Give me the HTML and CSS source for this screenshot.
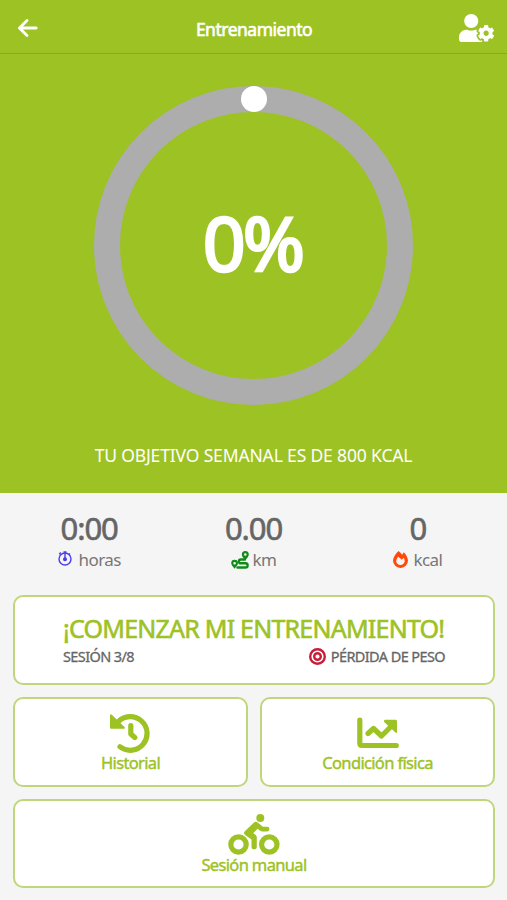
FILE: index.html
```
<!DOCTYPE html>
<html lang="es">
<head>
    <meta charset="UTF-8">
    <meta name="viewport" content="width=device-width, initial-scale=1.0">
    <title>Entrenamiento</title>
    <link rel="stylesheet" href="styles.css">
</head>
<body>

    <header class="topbar">
        <svg class="icon-back" viewBox="0 0 20 18"><path d="M18.200 9H2M9 1.500L1.500 9l7.500 7.500"/></svg>
        <h1 class="title">Entrenamiento</h1>
        <svg class="icon-user" viewBox="0 0 640 512"><path d="M610.500 373.300c2.600-14.100 2.600-28.500 0-42.600l25.800-14.900c3-1.700 4.300-5.200 3.300-8.500-6.700-21.600-18.200-41.200-33.200-57.400-2.300-2.500-6-3.100-9-1.400l-25.800 14.900c-10.900-9.300-23.400-16.500-36.900-21.300v-29.800c0-3.400-2.400-6.400-5.700-7.100-22.300-5-45-4.800-66.200 0-3.300.7-5.700 3.700-5.700 7.100v29.800c-13.500 4.800-26 12-36.900 21.300l-25.800-14.900c-2.900-1.700-6.700-1.100-9 1.400-15 16.200-26.500 35.800-33.200 57.400-1 3.300.4 6.800 3.300 8.500l25.800 14.900c-2.600 14.100-2.600 28.500 0 42.600l-25.800 14.900c-3 1.700-4.300 5.200-3.300 8.500 6.700 21.600 18.200 41.100 33.200 57.400 2.300 2.500 6 3.100 9 1.400l25.800-14.900c10.900 9.300 23.400 16.500 36.900 21.300v29.800c0 3.400 2.400 6.400 5.700 7.100 22.300 5 45 4.800 66.200 0 3.300-.7 5.700-3.700 5.700-7.100v-29.800c13.500-4.800 26-12 36.900-21.300l25.800 14.900c2.900 1.700 6.700 1.100 9-1.400 15-16.200 26.500-35.800 33.200-57.400 1-3.300-.4-6.800-3.300-8.500l-25.800-14.900zM496 400.500c-26.800 0-48.500-21.800-48.500-48.500s21.800-48.500 48.500-48.500 48.500 21.800 48.500 48.500-21.700 48.500-48.500 48.500zM224 256c70.700 0 128-57.300 128-128S294.700 0 224 0 96 57.300 96 128s57.300 128 128 128zm201.200 226.500c-2.300-1.200-4.600-2.600-6.800-3.900l-7.900 4.600c-6 3.400-12.800 5.300-19.600 5.300-10.900 0-21.400-4.600-28.900-12.600-18.300-19.800-32.300-43.900-40.200-69.600-5.500-17.700 1.900-36.400 17.900-45.700l7.900-4.600c-.1-2.600-.1-5.200 0-7.800l-7.900-4.600c-16-9.200-23.400-28-17.900-45.700.9-2.900 2.200-5.800 3.200-8.700-3.800-.3-7.500-1.200-11.400-1.200h-16.700c-22.200 10.200-46.900 16-72.900 16s-50.600-5.800-72.900-16h-16.700C60.200 288 0 348.200 0 422.400V464c0 26.500 21.500 48 48 48h352c10.100 0 19.500-3.200 27.200-8.500-1.200-3.800-2-7.700-2-11.800v-9.200z"/></svg>
    </header>

    <section class="goal">
        <div class="ring">
            <span class="ring-dot"></span>
            <span class="percent">0%</span>
        </div>
        <p class="goal-text">TU OBJETIVO SEMANAL ES DE 800 KCAL</p>
    </section>

    <section class="stats">
        <div class="stat">
            <span class="value">0:00</span>
            <div class="unit unit-hours">
                <svg class="icon-clock" viewBox="0 0 14 15"><circle cx="7" cy="8" r="6"/><path d="M7 .5V8M1.200 3.200L2.800 1.600M11 2.500l1 1M5.500 1h3"/><circle class="hub" cx="7" cy="8.200" r="1.300"/></svg>
                <span>horas</span>
            </div>
        </div>
        <div class="stat">
            <span class="value">0.00</span>
            <div class="unit unit-km">
                <svg class="icon-route" viewBox="0 0 18 18"><path d="M14 8.500H9.800a1.900 1.900 0 0 0 0 3.800h4.700a2.100 2.100 0 0 1 0 4.200H6.500"/><path class="pin" fill-rule="evenodd" d="M14.300 0a3.500 3.500 0 0 1 3.500 3.500c0 1.900-2 4-3.500 5.600-1.500-1.600-3.500-3.700-3.500-5.600A3.500 3.500 0 0 1 14.300 0zm0 2.200a1.300 1.300 0 1 0 0 2.600 1.300 1.300 0 0 0 0-2.600zM3.600 8.700a3.400 3.400 0 0 1 3.400 3.400c0 1.900-2 4-3.400 5.600C2.200 16.100.2 14 .2 12.100a3.400 3.400 0 0 1 3.400-3.400zm0 2.200a1.300 1.300 0 1 0 0 2.600 1.300 1.300 0 0 0 0-2.600z"/></svg>
                <span>km</span>
            </div>
        </div>
        <div class="stat">
            <span class="value">0</span>
            <div class="unit unit-kcal">
                <svg class="icon-fire" viewBox="0 0 15 17"><path fill-rule="evenodd" d="M5.500 0c1.500 1.200 2.700 2.500 3.600 3.700.5-.8 1.100-1.900 1.700-2.500 2.500 2.300 4.200 6 4.200 8.400A7.400 7.400 0 0 1 7.500 17 7.400 7.400 0 0 1 0 9.600C0 6.600 2.500 2.900 5.500 0zM5.200 5.800c-1.300 1.700-2.200 3.200-1.900 4.900.4 1.900 2 3.200 4.100 3.200 2.400 0 4.300-1.700 4.300-4 0-1.100-.4-2.200-1.100-3.200L8.800 8.700z"/></svg>
                <span>kcal</span>
            </div>
        </div>
    </section>

    <main class="actions">
        <button type="button" class="card start">
            <span class="start-title">¡COMENZAR MI ENTRENAMIENTO!</span>
            <span class="start-info">
                <span>SESIÓN 3/8</span>
                <span class="target">
                    <svg class="icon-target" viewBox="0 0 17 17"><circle cx="8.500" cy="8.500" r="7.300"/><circle cx="8.500" cy="8.500" r="3.300"/></svg>
                    <span>PÉRDIDA DE PESO</span>
                </span>
            </span>
        </button>
        <div class="row">
            <button type="button" class="card">
                <svg class="icon-history" viewBox="0 0 42 40"><path d="M8 9A16.800 16.800 0 1 1 10 33.800M20.800 12.500v8.500l4 3.500"/><path class="solid" d="M1.800 1.800Q0 .5 0 2.800V14.500q0 1.300 1.300 1.300h12.500q2-.3.700-1.800z"/></svg>
                <span class="label">Historial</span>
            </button>
            <button type="button" class="card">
                <svg class="icon-chart" viewBox="0 0 42 32"><path d="M2.800 3v23.200q0 2.300 2.300 2.300h34.200M11 16.500l5.500-5 8 7.500L35 8.500"/><path class="solid" d="M28 2.700h10.500q1.500 0 1.500 1.500V15q-.2 1.500-1.600.6L27.200 5q-1-1.900.8-2.300z"/></svg>
                <span class="label">Condición física</span>
            </button>
        </div>
        <button type="button" class="card">
            <svg class="icon-bike" viewBox="0 0 52 42"><circle cx="10.500" cy="30.500" r="7.700"/><circle cx="41.300" cy="30.500" r="7.700"/><circle class="solid" cx="32.300" cy="4" r="4"/><path class="solid" d="M29.600 8.500l5.300 4.200h4.200a2.300 2.300 0 0 1 0 4.700h-5q-1.300 0-2.300-.8l-2.300-1.800-4.300 4.500 2.300 1.500q1.300 1 1.300 2.600v9.300a2.600 2.600 0 0 1-5.300 0v-7.200l-6.400-4.400q-2.200-2 0-4.200L26 8.600q1.700-1.500 3.600-.1z"/></svg>
            <span class="label">Sesión manual</span>
        </button>
    </main>

</body>
</html>
```
FILE: styles.css
```
* {
    box-sizing: border-box;
}

body {
    margin: 0;
    height: 900px;
    background-color: #f5f5f5;
    font-family: 'Noto Sans', sans-serif;
    color: #666;
    overflow: hidden;
}

svg {
    display: block;
    flex: none;
}

span,
h1 {
    white-space: nowrap;
}

.topbar {
    display: grid;
    grid-template-columns: 1fr auto 1fr;
    align-items: center;
    height: 54px;
    padding: 0 13px 0 18px;
    background-color: #9dc224;
    border-bottom: 1px solid #87aa1f;
    color: #fff;
}

.icon-back {
    width: 20px;
    height: 18px;
    margin-top: 2px;
    fill: none;
    stroke: #fff;
    stroke-width: 2.8;
    stroke-linecap: round;
}

.title {
    margin: 5px 4px 0 0;
    font-size: 17.5px;
    line-height: 24px;
    font-weight: 400;
    letter-spacing: -0.5px;
    -webkit-text-stroke: 0.6px #fff;
}

.icon-user {
    width: 35px;
    height: 28px;
    margin-top: 2px;
    justify-self: end;
    fill: #fff;
}

.goal {
    display: flex;
    flex-direction: column;
    align-items: center;
    height: 439px;
    padding: 32px 0 0;
    background-color: #9dc224;
    color: #fff;
}

.ring {
    position: relative;
    display: flex;
    align-items: center;
    justify-content: center;
    width: 319px;
    height: 319px;
    border: 26px solid #adadad;
    border-radius: 50%;
}

.ring-dot {
    position: absolute;
    top: -26px;
    left: 121px;
    width: 26px;
    height: 26px;
    border-radius: 50%;
    background-color: #fff;
}

.percent {
    margin: -7px 2px 0 0;
    font-size: 75px;
    line-height: 1;
    letter-spacing: -2.8px;
    -webkit-text-stroke: 2.6px #fff;
}

.goal-text {
    margin: 38px 0 0;
    font-size: 17.5px;
    line-height: 24px;
    letter-spacing: -0.15px;
}

.stats {
    display: grid;
    grid-template-columns: repeat(3, 1fr);
    height: 102px;
    padding: 16px 7px 0;
}

.stat {
    display: flex;
    flex-direction: column;
    align-items: center;
}

.value {
    font-size: 31px;
    line-height: 38px;
    letter-spacing: -1.1px;
    -webkit-text-stroke: 0.6px #666;
}

.unit {
    display: flex;
    align-items: center;
    margin-top: 1px;
    font-size: 17px;
    line-height: 24px;
    letter-spacing: -0.6px;
    color: #777;
}

.unit-hours {
    gap: 7px;
}

.unit-km {
    gap: 4px;
}

.unit-kcal {
    gap: 5px;
}

.icon-clock {
    width: 14px;
    height: 15px;
    margin-bottom: 4px;
    fill: none;
    stroke: #4a3de8;
    stroke-width: 1.4;
}

.icon-clock .hub {
    fill: #4a3de8;
}

.icon-route {
    width: 18px;
    height: 18px;
    fill: none;
    stroke: #108a18;
    stroke-width: 2.4;
    stroke-linecap: round;
}

.icon-route .pin {
    fill: #108a18;
    stroke: none;
}

.icon-fire {
    width: 15px;
    height: 17px;
    margin-bottom: 1px;
    fill: #ff4a0a;
}

.actions {
    display: flex;
    flex-direction: column;
    gap: 12px;
    padding: 0 12px 0 13px;
}

.row {
    display: grid;
    grid-template-columns: 1fr 1fr;
    gap: 12px;
}

.card {
    display: flex;
    flex-direction: column;
    align-items: center;
    height: 90px;
    padding: 0;
    background-color: #fff;
    border: 2px solid #c0d67c;
    border-radius: 10px;
    font-family: inherit;
    color: #9dc224;
}

.start {
    padding: 15px 48px 0;
    align-items: stretch;
}

.start-title {
    font-size: 25px;
    line-height: 32px;
    letter-spacing: -0.77px;
    text-align: left;
    -webkit-text-stroke: 0.6px #9dc224;
}

.start-info {
    display: flex;
    justify-content: space-between;
    font-size: 14.5px;
    line-height: 24px;
    letter-spacing: -0.6px;
    color: #666;
    -webkit-text-stroke: 0.3px #666;
}

.target {
    display: flex;
    align-items: center;
    gap: 5px;
}

.icon-target {
    width: 17px;
    height: 17px;
    fill: none;
    stroke: #c4203a;
    stroke-width: 2.4;
}

.label {
    margin-top: -2px;
    font-size: 16.5px;
    line-height: 24px;
    letter-spacing: -0.65px;
    -webkit-text-stroke: 0.4px #9dc224;
}

.icon-history,
.icon-chart,
.icon-bike {
    fill: none;
    stroke: #9dc224;
    stroke-width: 5.2;
    stroke-linecap: round;
    stroke-linejoin: round;
}

.icon-bike .solid,
.icon-history .solid,
.icon-chart .solid {
    fill: #9dc224;
    stroke: none;
}

.icon-history {
    width: 42px;
    height: 40px;
    margin-top: 14px;
}

.icon-chart {
    width: 42px;
    height: 32px;
    margin: 18px 0 4px;
}

.icon-bike {
    width: 52px;
    height: 42px;
    margin-top: 13px;
}

.row + .card {
    height: 89px;
}

.row + .card .label {
    margin-top: -3px;
}
```
